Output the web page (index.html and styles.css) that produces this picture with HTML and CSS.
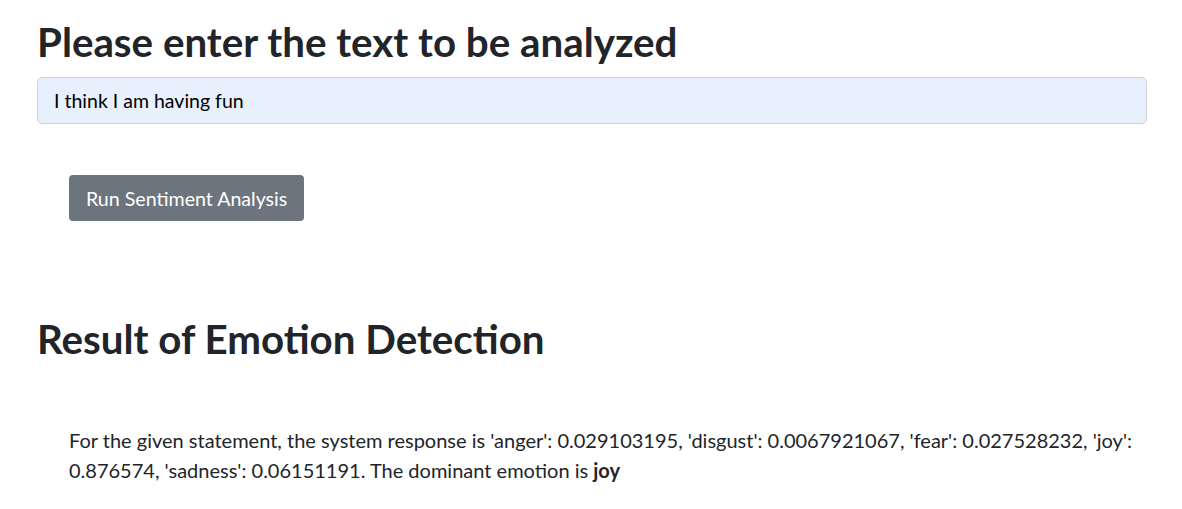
FILE: index.html
```html
<!DOCTYPE html>
<html lang="en">
<head>
<meta charset="utf-8">
<title>Emotion Detection</title>
<link rel="stylesheet" href="styles.css">
</head>
<body>
<div class="container">
  <h1 class="title">Please enter the text to be analyzed</h1>
  <input class="text-input" type="text" value="I think I am having fun">
  <div class="actions">
    <button class="btn" type="button">Run Sentiment Analysis</button>
  </div>
  <h1 class="title result-title">Result of Emotion Detection</h1>
  <div class="result">
    <p class="result-text">For the given statement, the system response is 'anger': 0.029103195, 'disgust': 0.0067921067, 'fear': 0.027528232, 'joy': 0.876574, 'sadness': 0.06151191. The dominant emotion is <b>joy</b></p>
  </div>
</div>
</body>
</html>
```
FILE: styles.css
```css
* { box-sizing: border-box; }
html, body { margin: 0; padding: 0; background: #fff; }
body {
  font-family: "Lato", "Noto Sans", sans-serif;
  color: #212529;
  font-size: 16px;
}
.container {
  padding: 18px 35px 0 37px;
}
.title {
  margin: 0 0 11px 0;
  font-size: 40.3px;
  line-height: 48px;
  font-weight: 700;
}
.text-input {
  display: block;
  width: 100%;
  height: 47px;
  padding: 0 16px;
  font-family: inherit;
  font-size: 19.5px;
  color: #000;
  background: #e8f0fe;
  border: 1px solid #ced4da;
  border-radius: 5px;
  outline: none;
}
.actions {
  padding: 51px 0 0 32px;
}
.btn {
  height: 46px;
  padding: 0 17px;
  font-family: inherit;
  font-size: 19.6px;
  color: #fff;
  background: #6c757d;
  border: none;
  border-radius: 4px;
}
.result-title {
  margin-top: 94px;
}
.result {
  padding: 51px 0 0 32px;
}
.result-text {
  margin: 0;
  font-size: 20px;
  line-height: 30px;
}
```
